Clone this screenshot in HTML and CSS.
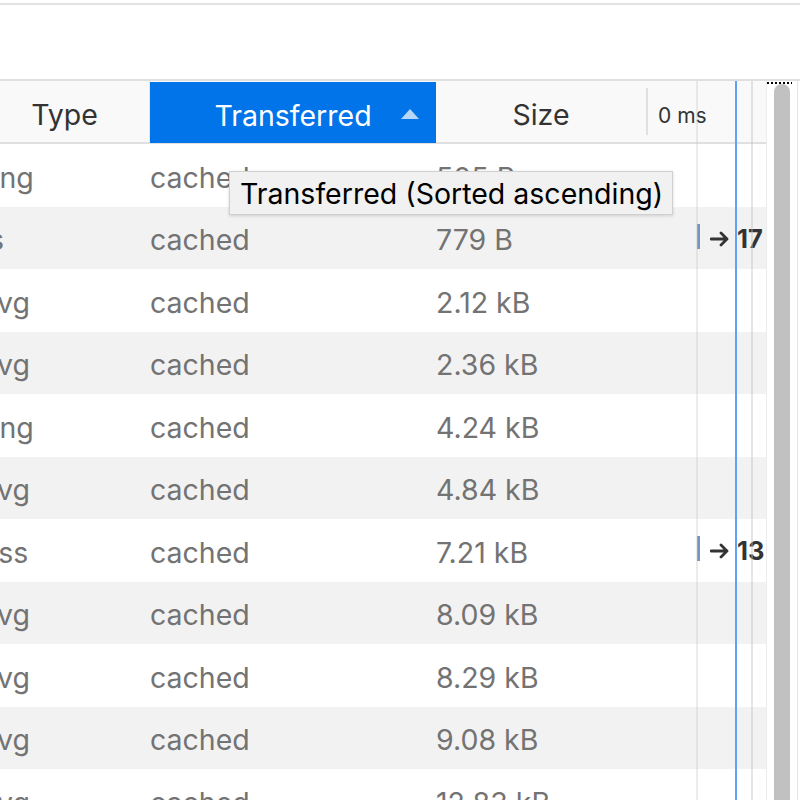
FILE: index.html
```html
<!DOCTYPE html>
<html>
<head>
<meta charset="utf-8">
<link rel="stylesheet" href="styles.css">
</head>
<body>
<div class="toolbar"></div>
<div class="panel">
  <div class="table-wrap">
    <div class="table">
      <div class="row head">
        <div class="cell c-type">Type</div>
        <div class="cell c-trans sorted">Transferred<span class="sort-arrow"></span></div>
        <div class="cell c-size">Size</div>
        <div class="cell c-wf"><span class="tick">0 ms</span></div>
      </div>
      <div class="row"><div class="cell c-type">png</div><div class="cell c-trans">cached</div><div class="cell c-size">505 B</div><div class="cell c-wf"></div></div>
      <div class="row odd"><div class="cell c-type">js</div><div class="cell c-trans">cached</div><div class="cell c-size">779 B</div><div class="cell c-wf"><span class="bar"></span><svg class="arrow" width="20" height="16" viewBox="0 0 20 16"><path d="M1 8 H17 M11 2 L17 8 L11 14" fill="none" stroke="#333" stroke-width="2.8" stroke-linecap="round" stroke-linejoin="round"/></svg><span class="count">17</span></div></div>
      <div class="row"><div class="cell c-type">svg</div><div class="cell c-trans">cached</div><div class="cell c-size">2.12 kB</div><div class="cell c-wf"></div></div>
      <div class="row odd"><div class="cell c-type">svg</div><div class="cell c-trans">cached</div><div class="cell c-size">2.36 kB</div><div class="cell c-wf"></div></div>
      <div class="row"><div class="cell c-type">png</div><div class="cell c-trans">cached</div><div class="cell c-size">4.24 kB</div><div class="cell c-wf"></div></div>
      <div class="row odd"><div class="cell c-type">svg</div><div class="cell c-trans">cached</div><div class="cell c-size">4.84 kB</div><div class="cell c-wf"></div></div>
      <div class="row"><div class="cell c-type">css</div><div class="cell c-trans">cached</div><div class="cell c-size">7.21 kB</div><div class="cell c-wf"><span class="bar"></span><svg class="arrow" width="20" height="16" viewBox="0 0 20 16"><path d="M1 8 H17 M11 2 L17 8 L11 14" fill="none" stroke="#333" stroke-width="2.8" stroke-linecap="round" stroke-linejoin="round"/></svg><span class="count">13</span></div></div>
      <div class="row odd"><div class="cell c-type">svg</div><div class="cell c-trans">cached</div><div class="cell c-size">8.09 kB</div><div class="cell c-wf"></div></div>
      <div class="row"><div class="cell c-type">svg</div><div class="cell c-trans">cached</div><div class="cell c-size">8.29 kB</div><div class="cell c-wf"></div></div>
      <div class="row odd"><div class="cell c-type">svg</div><div class="cell c-trans">cached</div><div class="cell c-size">9.08 kB</div><div class="cell c-wf"></div></div>
      <div class="row"><div class="cell c-type">svg</div><div class="cell c-trans">cached</div><div class="cell c-size">12.83 kB</div><div class="cell c-wf"></div></div>
    </div>
    <div class="vline v1"></div>
    <div class="vline v2"></div>
    <div class="vline v3"></div>
    <div class="tooltip">Transferred (Sorted ascending)</div>
  </div>
  <div class="scrollbar"><div class="dots"></div><div class="thumb"></div></div>
</div>
</body>
</html>
```

FILE: styles.css
```css
html, body {
  margin: 0;
  padding: 0;
  background: #fff;
  font-family: "Inter", "Noto Sans", sans-serif;
  overflow: hidden;
}
.toolbar {
  height: 74px;
  margin-top: 3px;
  border-top: 2px solid #e2e2e2;
}
.panel {
  display: flex;
  border-top: 2px solid #e0e0e0;
  height: 721px;
}
.table-wrap {
  position: relative;
  width: 766px;
  overflow: hidden;
  flex: none;
}
.table {
  margin-left: -20px;
  width: 786px;
}
.row {
  display: grid;
  grid-template-columns: 170px 286px 210px 120px;
  height: 62.5px;
  align-items: center;
  font-size: 28.5px;
  color: #737373;
}
.row.odd {
  background: #f2f2f2;
}
.row.head {
  height: 61px;
  background: #f9f9f9;
  border-bottom: 2px solid #e0e0e0;
  color: #333;
  align-items: stretch;
}
.cell {
  white-space: nowrap;
  overflow: hidden;
  display: flex;
  align-items: center;
  height: 100%;
  box-sizing: border-box;
  padding-top: 4px;
}
.row .c-type { padding-left: 2px; }
.row .c-trans { padding-left: 0; }
.row .c-size { padding-left: 0; }
.head .cell {
  justify-content: center;
  padding-left: 0;
  padding-top: 5px;
}
.head .c-type { border-right: 1px solid #e6e6e6; }
.head .c-trans.sorted {
  position: relative;
  background: #0074e8;
  color: #fff;
  margin-top: 1px;
}
.sort-arrow {
  position: absolute;
  right: 17px;
  top: 27px;
  width: 0;
  height: 0;
  border-left: 9px solid transparent;
  border-right: 9px solid transparent;
  border-bottom: 10px solid #b8d6f7;
}
.head .c-wf {
  justify-content: flex-start;
  position: relative;
}
.head .c-wf::before {
  content: "";
  position: absolute;
  left: 0;
  top: 7px;
  bottom: 7px;
  width: 2px;
  background: #e0e0e0;
}
.tick {
  font-size: 21px;
  margin-left: 12px;
  margin-top: 3px;
  color: #333;
}
.row .c-wf {
  position: relative;
}
.bar {
  position: absolute;
  left: 51px;
  top: 17px;
  width: 3px;
  height: 25px;
  background: #7596bd;
}
.arrow {
  position: absolute;
  left: 64px;
  top: 24px;
}
.count {
  position: absolute;
  left: 91px;
  top: 16px;
  font-weight: 700;
  font-size: 25.5px;
  color: #333;
}
.vline {
  position: absolute;
  top: 0;
  bottom: 0;
  width: 2px;
}
.v1 { left: 696px; background: rgba(200, 200, 200, 0.35); }
.v2 { left: 735px; background: #5da2f6; }
.v3 { left: 751px; background: rgba(190, 190, 190, 0.4); }
.tooltip {
  position: absolute;
  left: 229px;
  top: 90px;
  height: 42px;
  padding: 0 9px 0 10px;
  display: flex;
  align-items: center;
  background: #f1f1f1;
  border: 1px solid #d0d0d0;
  box-shadow: 0 1px 3px rgba(0, 0, 0, 0.15);
  font-size: 28.5px;
  color: #000;
  white-space: nowrap;
}
.scrollbar {
  flex: 1;
  position: relative;
  background: #fff;
  border-left: 1px solid #ececec;
}
.scrollbar::after {
  content: "";
  position: absolute;
  right: 2px;
  top: 0;
  bottom: 0;
  width: 1px;
  background: #e4e4e4;
}
.dots {
  position: absolute;
  left: 0;
  top: 1px;
  width: 25px;
  height: 2px;
  background: repeating-linear-gradient(90deg, #000 0 2px, transparent 2px 4px);
}
.thumb {
  position: absolute;
  left: 7px;
  top: 3px;
  bottom: 0;
  width: 16px;
  background: #c1c1c1;
  border-radius: 8px 8px 0 0;
}
```
